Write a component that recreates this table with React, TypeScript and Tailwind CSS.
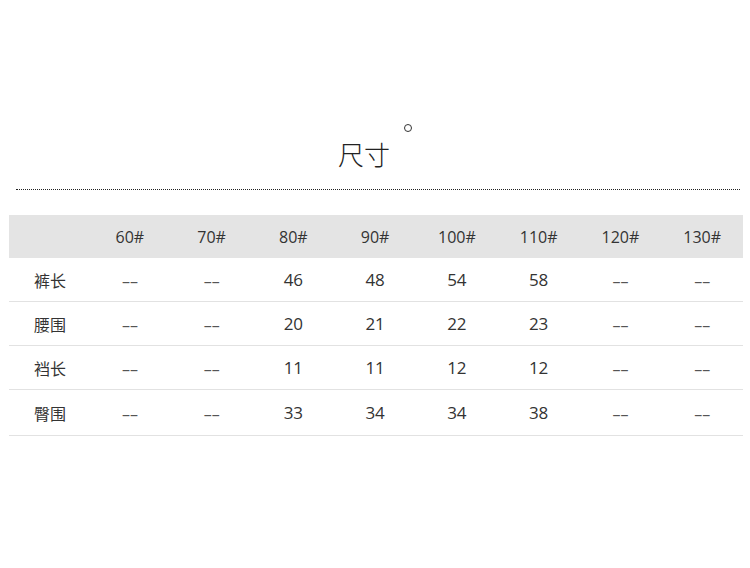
const sizes = ['60#', '70#', '80#', '90#', '100#', '110#', '120#', '130#'];

const rows = [
  { label: '裤长', values: ['––', '––', '46', '48', '54', '58', '––', '––'], h: 'h-[44px]' },
  { label: '腰围', values: ['––', '––', '20', '21', '22', '23', '––', '––'], h: 'h-[44px]' },
  { label: '裆长', values: ['––', '––', '11', '11', '12', '12', '––', '––'], h: 'h-[44px]' },
  { label: '臀围', values: ['––', '––', '33', '34', '34', '38', '––', '––'], h: 'h-[46px]' },
];

const font = "font-['Open_Sans','Noto_Sans_CJK_SC',sans-serif]";

export default function App() {
  return (
    <div className={`w-[750px] h-[568px] bg-white ${font} text-[#333]`}>
      <div className="pt-[141px]">
        {/* Title */}
        <div className="flex items-start justify-center">
          <span className="text-[26px] leading-[26px] font-light text-[#222] font-['Noto_Sans_CJK_SC',sans-serif]">尺寸</span>
          <span className="ml-[14px] -mt-[17px] w-[8px] h-[8px] rounded-full border-[1.5px] border-[#333]" />
        </div>

        {/* Dotted rule */}
        <div className="ml-[16px] mr-[10px] mt-[22px] border-t border-dotted border-[#222]" />

        {/* Table */}
        <div className="ml-[9px] w-[734px] mt-[25px]">
          <div className="grid grid-cols-[80px_repeat(8,1fr)] h-[43px] items-center bg-[#e4e4e4] text-[16px]">
            <span />
            {sizes.map((s) => (
              <span key={s} className="text-center">{s}</span>
            ))}
          </div>
          {rows.map((r) => (
            <div
              key={r.label}
              className={`grid grid-cols-[80px_repeat(8,1fr)] ${r.h} items-center border-b border-[#e2e2e2] text-[17px]`}
            >
              <span className="pl-[25px] text-[16px] font-['Noto_Sans_CJK_SC',sans-serif]">{r.label}</span>
              {r.values.map((v, i) => (
                <span key={i} className={`text-center ${v === '––' ? 'text-[#555] text-[16px] pt-[2px]' : ''}`}>
                  {v}
                </span>
              ))}
            </div>
          ))}
        </div>
      </div>
    </div>
  );
}
